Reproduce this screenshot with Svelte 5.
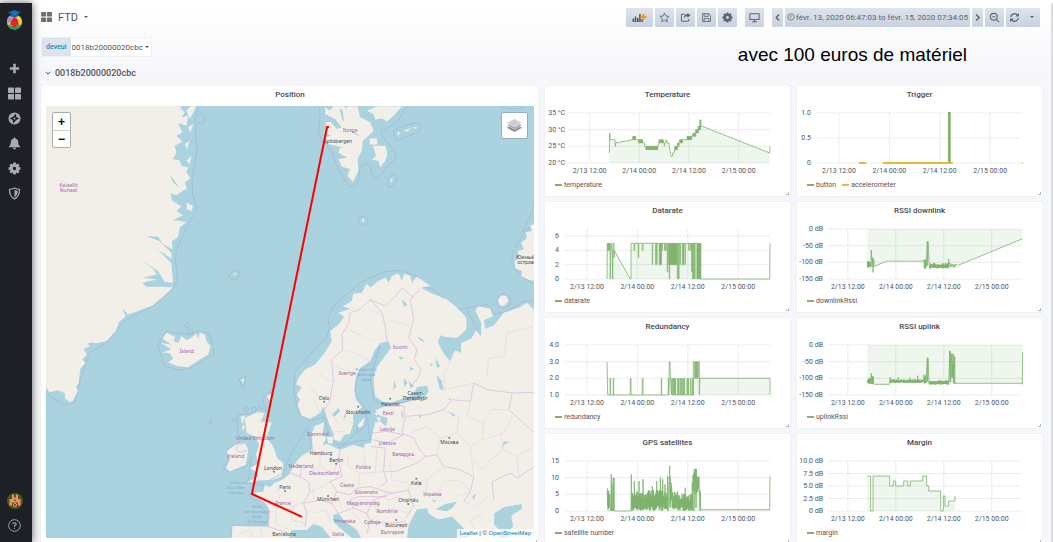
<script>
  let device = $state('0018b20000020cbc');

  const START = 6.78;
  const HOURS = 48.79;
  const RIGHT = 225;
  const TOP = 11;
  const BOTTOM = 61;
  const ticks = [
    [12, '2/13 12:00'],
    [24, '2/14 00:00'],
    [36, '2/14 12:00'],
    [48, '2/15 00:00']
  ];

  // Small seeded generator, so that the noisy series are the same on every load.
  let seed = 7;
  function rnd() {
    seed = (seed * 16807) % 2147483647;
    return seed / 2147483647;
  }
  function jitter(from, to, step, lo, hi) {
    const out = [];
    let up = false;
    for (let x = from; x <= to; x += step) {
      up = !up;
      const range = hi - lo;
      out.push([x, up ? hi - rnd() * range * 0.4 : lo + rnd() * range * 0.25]);
    }
    return out;
  }
  function square(from, to, step, lo, hi) {
    const out = [];
    for (let x = from; x <= to; x += step) out.push([x, hi], [x, lo], [x + step / 2, lo], [x + step / 2, hi]);
    return out;
  }
  // Short dips (or peaks) to a second value from a flat line.
  function spikes(base, list) {
    return list.flatMap(([x, v, w = 1]) => [[x, base], [x, v], [x + w, v], [x + w, base]]);
  }
  const ordered = (pts) => [...pts].sort((a, b) => a[0] - b[0]);

  const temperature = [
    [208, 23], [209, 29], [211, 27], [225, 27], [226, 25], [227, 26], [278, 27],
    ...square(279, 285, 2, 27, 28), [287, 27], ...square(296, 306, 2, 26, 27), [308, 26], [314, 26], [314, 25],
    ...square(318, 352, 2, 24, 25), [354, 25], [356, 26], ...square(358, 368, 2, 26, 27), [372, 26], [373, 25], [375, 26],
    [379, 27], [381, 26], [387, 26], [388, 25], [391, 23], [393, 22], [397, 22], [398, 23], [402, 23], [404, 24],
    ...square(405, 411, 2, 24, 25), [413, 26], ...square(414, 417, 2, 25, 26), ...square(420, 426, 2, 26, 27), [428, 27],
    [441, 27], ...square(442, 454, 2, 27, 28), [457, 28], ...square(460, 466, 2, 28, 29), ...square(468, 474, 2, 29, 30),
    ...square(475, 479, 2, 30, 31), [480, 33], [481, 30], [482, 33], [483, 31], [487, 31], [689, 23], [690, 25]
  ];
  const datarate = [
    [201, 0], [202, 5], ...square(203, 207, 2, 4, 5), [211, 5], [211, 0], [213, 5], [217, 4], [218, 0], [219, 5], [222, 5], [222, 3], [223, 4],
    [271, 0], [273, 0], [273, 5],
    ...spikes(5, [[282, 4, 2], [295, 3], [307, 4, 2], [337, 2, 1], [347, 2, 1], [350, 2], [358, 2], [361, 2, 1], [363, 2, 1], [366, 4],
      [374, 4], [377, 4], [382, 1], [386, 2], [388, 0, 1], [391, 2]]),
    ...square(393, 410, 2, 2, 5),
    ...spikes(5, [[412, 0, 1], [416, 0], [420, 2], [427, 2, 2], [430, 2, 1], [435, 2, 1], [446, 4], [452, 4], [455, 1], [458, 0], [461, 0], [464, 0]]),
    ...square(471, 481, 2, 0, 5), [482, 0], [689, 0], [690, 5]
  ];
  const redundancy = [
    [201, 3], [203, 1], ...spikes(1, [[210, 2, 2], [220, 2, 1], [271, 2, 2], [307, 2, 2], [364, 2, 1], [385, 2]]), [387, 2], [388, 3], [390, 3], [391, 2],
    ...spikes(1, [[395, 2, 2], [399, 2, 2], [403, 2, 1], [406, 2, 1], [413, 2], [416, 2, 1], [421, 2, 2], [425, 2, 1], [429, 2, 1], [433, 2, 1], [441, 2], [445, 2], [452, 2], [458, 2]]),
    [460, 1], [460, 3], ...square(464, 475, 3, 2, 3), [478, 3], [478, 1], [480, 2], [690, 2], [690, 1]
  ];
  const satellites = ordered([
    ...jitter(202, 210, 0.7, 0, 7), [212, 0], [214, 11], [215, 0], [216, 8], [217, 0], [220, 10], [221, 0], [222, 10], [223, 0], [273, 0], [274, 11], [275, 0],
    ...jitter(276, 382, 0.7, 0, 6.4), [283, 9], [297, 9], [309, 9.5], [337, 7.5], [350, 9],
    [361, 10], [368, 9.5], [375, 8], [383, 10.5], [384, 0], [389, 13.5], [390, 1],
    ...jitter(391, 395, 0.6, 1, 11), ...jitter(396, 415, 0.9, 0, 6), ...jitter(416, 456, 0.8, 0, 5.2),
    [436, 7], [457, 8.5], [458, 0], ...jitter(459, 478, 1, 5, 12.8), [462, 0], [468, 1], [480, 0], [481, 6], [482, 0.4], [689, 0.4], [690, 10.5]
  ]);
  const downlink = [
    ...jitter(217, 227, 0.9, -118, -92), [229, -63], [231, -115], [233, -85], [234, -130], [236, -90], [238, -112], [280, -95],
    ...jitter(281, 386, 2.2, -98, -95), ...jitter(387, 395, 0.9, -122, -90), [397, -37], [398, -110], [399, -38], [402, -90], [404, -120],
    ...jitter(405, 460, 0.9, -118, -102), [461, -90], [462, -105], ...jitter(463, 484, 2.4, -117, -101), [487, -110], [683, -29]
  ];
  const uplink = ordered([
    ...jitter(217, 228, 0.8, -118, -98), [229, -85], [230, -117], ...jitter(231, 236, 0.9, -118, -92), [237, -118], [284, -118], [285, -97],
    ...jitter(286, 386, 0.8, -114, -103), [310, -97], [345, -98], [368, -92],
    ...jitter(387, 394, 0.9, -118, -88), [397, -38], [398, -110], [399, -40], [402, -115],
    ...jitter(403, 462, 0.8, -119, -106), [464, -17], [465, -110], [466, -20], [467, -112], [468, -28], ...jitter(470, 475, 0.7, -115, -25),
    [476, -28], [477, -117], [479, -35], [480, -117], [481, -115], [681, -115], [682, -118], [683, -22]
  ]);
  const margin = [
    [217, 7], [227, 7], [227, 0], [234, 0], [234, 7], [284, 7], [284, 5], [295, 5], [295, 6], [302, 6], [302, 5], [326, 5], [326, 6],
    [338, 6], [338, 5], [346, 5], [346, 6], [383, 6], [383, 7], [395, 7], [395, 5], [401, 5], [401, 4], [437, 4], [437, 0],
    [445, 0], [445, 3], [450, 3], [450, 1], [461, 1], [461, 2], [480, 2], [480, 3]
  ];

  const GREEN = '#7eb26d';
  const ORANGE = '#eab839';
  const charts = [
    { title: 'Temperature', left: 23, shift: 5, gap: 3, lo: 20, hi: 35, y: [[35, '35 °C'], [30, '30 °C'], [25, '25 °C'], [20, '20 °C']], base: 20,
      series: [{ name: 'temperature', color: GREEN, lines: [temperature] }] },
    { title: 'Trigger', left: 20, shift: 2, gap: 6, lo: 0, hi: 1, y: [[1, '1.0'], [0.5, '0.5'], [0, '0']], base: 0,
      series: [
        { name: 'button', color: GREEN, width: 2, lines: [[[462, 0], [462, 1], [464, 1], [464, 0]]] },
        { name: 'accelerometer', color: ORANGE, width: 2, lines: [[[192, 0], [214, 0]], [[263, 0], [473, 0]], [[681, 0], [683, 0]]] }
      ] },
    { title: 'Datarate', left: 20, shift: 5, gap: 6, lo: 0, hi: 7, y: [[6, '6'], [4, '4'], [2, '2'], [0, '0']], base: 0,
      series: [{ name: 'datarate', color: GREEN, lines: [datarate] }] },
    { title: 'RSSI downlink', left: 30, shift: 2, gap: 4, lo: -150, hi: 0, y: [[0, '0 dB'], [-50, '-50 dB'], [-100, '-100 dB'], [-150, '-150 dB']], base: 0,
      series: [{ name: 'downlinkRssi', color: GREEN, lines: [downlink] }] },
    { title: 'Redundancy', left: 20, shift: 5, gap: 6, lo: 1, hi: 4, y: [[4, '4.0'], [3, '3.0'], [2, '2.0'], [1, '1.0']], base: 1,
      series: [{ name: 'redundancy', color: GREEN, lines: [redundancy] }] },
    { title: 'RSSI uplink', left: 30, shift: 2, gap: 4, lo: -150, hi: 0, y: [[0, '0 dB'], [-50, '-50 dB'], [-100, '-100 dB'], [-150, '-150 dB']], base: 0,
      series: [{ name: 'uplinkRssi', color: GREEN, lines: [uplink] }] },
    { title: 'GPS satellites', left: 20, shift: 5, gap: 6, lo: 0, hi: 15, y: [[15, '15'], [10, '10'], [5, '5'], [0, '0']], base: 0,
      series: [{ name: 'satellite number', color: GREEN, lines: [satellites] }] },
    { title: 'Margin', left: 30, shift: 2, gap: 4, lo: 0, hi: 10, y: [[10, '10.0 dB'], [7.5, '7.5 dB'], [5, '5.0 dB'], [2.5, '2.5 dB'], [0, '0 dB']], base: 0,
      series: [{ name: 'margin', color: GREEN, lines: [margin] }] }
  ];

  const yOf = (c, v) => BOTTOM - ((v - c.lo) / (c.hi - c.lo)) * (BOTTOM - TOP);
  const tickX = (c, t) => c.left + ((t - START) / HOURS) * (RIGHT - c.left);
  const line = (c, pts) => pts.map(([x, v]) => `${(x / 3 - c.shift).toFixed(1)},${yOf(c, v).toFixed(1)}`).join(' ');
  function area(c, pts) {
    const b = yOf(c, c.base);
    const first = pts[0][0] / 3 - c.shift;
    const last = pts[pts.length - 1][0] / 3 - c.shift;
    return `${first},${b} ${line(c, pts)} ${last},${b}`;
  }

  // Map labels: x, y, text, kind
  const places = [
    [69, 188, 'Kalaallit', 'country'], [69, 193, 'Nunaat', 'country'], [350, 133, 'Norge', 'country'], [338, 144, 'Spitsbergen', 'city'],
    [187, 353, 'Ísland', 'country'], [400, 349, 'Suomi', 'country'], [347, 375, 'Sverige', 'country'],
    [366, 371, 'Pohjanlahti', 'sea'], [366, 376, 'Bottniska', 'sea'], [366, 381, 'viken', 'sea'],
    [324, 400, 'Oslo', 'city'], [358, 414, 'Stockholm', 'city'], [390, 406, 'Helsinki', 'city'],
    [415, 395, 'Санкт-', 'city'], [415, 400, 'Петербург', 'city'], [388, 415, 'Eesti', 'country'], [387, 431, 'Latvija', 'country'],
    [387, 445, 'Lietuva', 'country'], [318, 436, 'Danmark', 'country'], [449, 444, 'Москва', 'city'],
    [403, 456, 'Беларусь', 'country'], [321, 455, 'Hamburg', 'city'], [336, 462, 'Berlin', 'city'],
    [301, 468, 'Nederland', 'country'], [363, 469, 'Polska', 'country'], [324, 475, 'Deutschland', 'country'],
    [273, 470, 'London', 'city'], [285, 489, 'Paris', 'city'], [347, 487, 'Česko', 'country'], [366, 494, 'Slovensko', 'country'],
    [416, 485, 'Київ', 'city'], [432, 496, 'Україна', 'country'], [328, 501, 'München', 'city'], [363, 505, 'Magyarország', 'country'],
    [408, 502, 'Chișinău', 'city'], [283, 505, 'France', 'country'], [387, 513, 'România', 'country'],
    [345, 523, 'Hrvatska', 'country'], [372, 524, 'Србија', 'country'], [396, 527, 'București', 'city'], [392, 534, 'България', 'country'],
    [338, 536, 'Italia', 'country'], [284, 536, 'Barcelona', 'city'], [236, 458, 'Ireland', 'country'], [255, 440, 'United Kingdom', 'country'],
    [236, 484, 'Celtic', 'sea'], [236, 489, 'Sea / Mer', 'sea'], [236, 494, 'Celtique', 'sea'],
    [257, 508, 'Golfe', 'sea'], [257, 513, 'de Gascogne', 'sea'], [257, 518, 'Golfo', 'sea'], [257, 523, 'de Vizcaya', 'sea'],
    [525, 260, 'Южный', 'city'], [525, 265, 'остров', 'city']
  ];
  const dots = [[324, 402], [358, 407], [390, 399], [336, 464], [285, 491], [274, 472], [416, 479], [328, 496], [408, 504], [396, 520], [449, 438]];

  const nav = ['Create', 'Dashboards', 'Explore', 'Alerting', 'Configuration', 'Server admin'];
</script>

{#snippet tiles()}
  <svg viewBox="0 0 13 12" aria-hidden="true"><path fill="currentColor" d="M1 0h4.300q.7 0 .7.700v4.100q0 .7-.7.700H.7q-.7 0-.7-.7V.7Q0 0 .7 0zM7.700 0h4.600q.7 0 .7.700v4.100q0 .7-.7.700H7.700q-.7 0-.7-.7V.7q0-.7.700-.7zM.7 6.500h4.600q.7 0 .7.700v4.100q0 .7-.7.700H.7q-.7 0-.7-.7V7.200q0-.7.700-.7zM7.700 6.500h4.600q.7 0 .7.700v4.100q0 .7-.7.700H7.700q-.7 0-.7-.7V7.200q0-.7.700-.7z" /></svg>
{/snippet}

{#snippet gear()}
  <svg viewBox="0 0 14 14" aria-hidden="true">
    <g fill="currentColor">
      {#each [0, 45, 90, 135] as a}
        <path d="M5.700 .6h2.600l.5 3h-3.600zM5.700 13.400h2.600l.5-3h-3.600z" transform="rotate({a} 7 7)" />
      {/each}
    </g>
    <circle cx="7" cy="7" r="3.200" fill="none" stroke="currentColor" stroke-width="2.800" />
  </svg>
{/snippet}

<div class="app">
  <nav class="side">
    <a class="logo" href="#home" aria-label="Home">
      <svg viewBox="0 0 18 22">
        <circle cx="9" cy="13" r="8" fill="#f4d03b" />
        <path d="M1 13.500A8 8 0 0 1 6.500 5.500Q7.500 9 4 14.500z" fill="#9b8fd0" />
        <path d="M6 5.500h6Q10.500 8.500 9 9T6 5.500z" fill="#2c6ec0" />
        <path d="M4.500 16Q5.500 9 9 8.500T13.500 16Q9 19 4.500 16z" fill="#e4202c" />
        <path d="M1.500 15.500Q5 17.500 9 17.300T16.600 15.500A8 8 0 0 1 1.500 15.500z" fill="#1aa24a" />
        <path d="M7 17.300L9 19l2-1.700z" fill="#e4202c" />
        <path d="M2 3L9 .5 16 3 9 5.500z" fill="#1770c2" />
        <path d="M4.500 4.500v2.300q4.500 2 9 0V4.500L9 6z" fill="#0d5aa7" />
      </svg>
    </a>
    <ul>
      {#each nav as name, i}
        <li>
          <a href="#{name.toLowerCase().replace(' ', '-')}" aria-label={name}>
            {#if i === 0}
              <svg viewBox="0 0 14 14"><path d="M7 2v10M2 7h10" stroke="currentColor" stroke-width="2.800" /></svg>
            {:else if i === 1}
              {@render tiles()}
            {:else if i === 2}
              <svg viewBox="0 0 14 14"><circle cx="7" cy="7" r="6.500" fill="currentColor" /><path d="M8.500 1.800L9 5.500 12.200 7 9 8.500 5.500 12.200 5 8.500 1.800 7 5 5.500z" fill="#1e2028" /><circle cx="7" cy="7" r="1.100" fill="currentColor" /></svg>
            {:else if i === 3}
              <svg viewBox="0 0 14 14"><path fill="currentColor" d="M7 .5q1 0 1 1.200Q11 2.600 11 6q0 3 2 4.200V11H1v-.8Q3 9 3 6q0-3.400 3-4.300Q6 .5 7 .5zM5.200 11.700h3.600Q8.500 13.500 7 13.500T5.200 11.700z" /></svg>
            {:else if i === 4}
              {@render gear()}
            {:else}
              <svg viewBox="0 0 14 14"><path d="M7 1Q10 2.500 12.400 2.500 12.600 10 7 13 1.400 10 1.600 2.500 4 2.500 7 1z" fill="none" stroke="currentColor" stroke-width="1.300" /><path d="M7 3q2 1 3.600 1.200Q10.300 9 7 11.200z" fill="currentColor" /></svg>
            {/if}
          </a>
        </li>
      {/each}
    </ul>
    <div class="foot">
      <a href="#profile" aria-label="Profile">
        <svg viewBox="0 0 16 16"><circle cx="8" cy="8" r="8" fill="#4b5a12" /><path d="M5 1.500h2v3h2v-3h2V6h2.500v6.500H11V9.500H5v3H2.500V6H5z" fill="#f08a72" /><circle cx="8" cy="12" r="1.600" fill="none" stroke="#f08a72" /><path d="M7.300 6.500h1.400V8H7.300z" fill="#4b5a12" /></svg>
      </a>
      <a href="#help" aria-label="Help">
        <svg viewBox="0 0 14 14"><circle cx="7" cy="7" r="6.300" fill="none" stroke="currentColor" /><path d="M5.200 5.600Q5.200 4 7 4t1.800 1.500Q8.800 6.500 7 7.300v1.100M7 9.300v1.300" fill="none" stroke="currentColor" stroke-width="1.200" /></svg>
      </a>
    </div>
  </nav>

  <main>
    <header>
      <button class="dash">{@render tiles()}<span>FTD</span><i class="caret"></i></button>
      <div class="tools">
        <div class="group">
          <button class="tool wide" aria-label="Add panel"><svg viewBox="0 0 17 12"><path d="M1.500 11V7M4 11V5M6.500 11V6.500M9 11V2M11.500 11V8" stroke="#4a505b" stroke-width="1.700" /><path d="M12.800 2v7M9.500 5.500h7" stroke="#f79520" stroke-width="2.200" /></svg></button>
          <button class="tool" aria-label="Star"><svg viewBox="0 0 12 12"><path d="M6 1.200l1.500 3.200 3.500.4-2.600 2.400.7 3.500L6 9l-3.100 1.700.7-3.500L1 4.800l3.500-.4z" fill="none" stroke="currentColor" stroke-width=".9" /></svg></button>
          <button class="tool" aria-label="Share"><svg viewBox="0 0 12 12"><path d="M5 2.500H2.500q-1 0-1 1V9q0 1 1 1h6q1 0 1-1V7.500" fill="none" stroke="currentColor" stroke-width="1.100" /><path d="M8 .8l3.500 2.700L8 6.200V4.600Q5 4.500 4.200 7.200 3.600 2.800 8 2.500z" fill="currentColor" /></svg></button>
          <button class="tool" aria-label="Save"><svg viewBox="0 0 12 12"><path d="M1.800 1.800h6.700l1.900 1.900v6.600H1.800zM3.500 1.800v3h4.300v-3M3.500 10.300V7h5v3.300" fill="none" stroke="currentColor" stroke-width=".9" /></svg></button>
          <button class="tool" aria-label="Settings">{@render gear()}</button>
        </div>
        <button class="tool" aria-label="Cycle view"><svg viewBox="0 0 12 12"><path d="M1 1.800h10v6.400H1zM6 8.500v2M3.500 10.700h5" fill="none" stroke="currentColor" stroke-width="1.100" /></svg></button>
        <div class="group">
          <button class="tool slim" aria-label="Earlier"><svg viewBox="0 0 8 12"><path d="M5.800 2.500L2.500 6l3.300 3.500" fill="none" stroke="currentColor" stroke-width="1.600" /></svg></button>
          <button class="tool range"><svg viewBox="0 0 12 12"><circle cx="6" cy="6" r="4.800" fill="none" stroke="currentColor" stroke-width="1.100" /><path d="M6 3v3.500H4" fill="none" stroke="currentColor" /></svg><span>févr. 13, 2020 06:47:03 to févr. 15, 2020 07:34:05</span></button>
          <button class="tool slim" aria-label="Later"><svg viewBox="0 0 8 12"><path d="M2.500 2.500L5.800 6 2.500 9.500" fill="none" stroke="currentColor" stroke-width="1.600" /></svg></button>
          <button class="tool" aria-label="Zoom out"><svg viewBox="0 0 12 12"><circle cx="5.200" cy="5.200" r="3.700" fill="none" stroke="currentColor" stroke-width="1.200" /><path d="M8 8l3 3M3.500 5.200h3.400" stroke="currentColor" stroke-width="1.200" /></svg></button>
          <div class="pair">
            <button class="tool" aria-label="Refresh"><svg viewBox="0 0 12 12"><path d="M2 5.500A4 4 0 0 1 9.300 3.600M10 6.500A4 4 0 0 1 2.700 8.400" fill="none" stroke="currentColor" stroke-width="1.400" /><path d="M10.800 1v4H6.900zM1.200 11V7h3.900z" fill="currentColor" /></svg></button>
            <button class="tool" aria-label="Refresh interval"><i class="caret"></i></button>
          </div>
        </div>
      </div>
    </header>

    <div class="submenu">
      <div class="variable">
        <label for="deveui">deveui</label>
        <div class="pick">
          <select id="deveui" bind:value={device}><option>0018b20000020cbc</option></select>
          <i class="caret"></i>
        </div>
      </div>
      <p class="note">avec 100 euros de matériel</p>
    </div>

    <h1><svg viewBox="0 0 6 6" aria-hidden="true"><path d="M.8 1.800L3 4l2.200-2.200" fill="none" stroke="currentColor" /></svg>{device}</h1>

    <div class="grid">
      <section class="panel position">
        <h2>Position</h2>
        <div class="map">
          <svg class="world" viewBox="46 107 488 431" preserveAspectRatio="xMidYMid slice" role="img" aria-label="Position">
            <rect x="46" y="107" width="488" height="431" fill="#aad3df" />
            <!-- Greenland, Iceland, the British Isles and smaller islands -->
            <g transform="translate(0 200) scale(.33333)">
              <g class="zone">
                <path d="M590-280Q595-262 589-250M589-225Q583-200 590-175L592-145 577-60 578-15 592 30 562 80 530 150 527 180 533 240 520 268 460 320 378 362 345 400 315 435 272 458 245 530 228 603Q210 622 185 610L138 583" />
                <circle cx="601" cy="-240" r="15" /><circle cx="562" cy="378" r="7" /><circle cx="571" cy="399" r="8" /><circle cx="632" cy="667" r="4" />
                <circle cx="739" cy="630" r="7" /><circle cx="761" cy="629" r="7" /><circle cx="704" cy="661" r="6" />
                <path d="M500 395L560 404 600 393 627 402 637 430 643 465 600 490 570 506 535 512 493 497 475 437zM688 232Q690 215 712 211 728 222 714 235 698 246 688 232zM717 538L737 530 735 550 728 565z" />
                <path d="M815 575Q790 585 790 605L800 635 775 620 765 640 715 645 712 700 725 720 680 750 684 785 670 800 680 815 700 812 740 800 755 770 745 845 725 850 790 855 795 875 745 885 790 925 806 960 795 975 700 975 690 990 700 1015" />
              </g>
              <path class="land" d="M540-282L548-270 536-278 555-260 545-245 565-250 560-220 535-228 548-200 530-190 548-172 525-160 530-140 520-120 540-116 545-100 565-95 560-80 572-62 555-50 562-30 545-26 510-75 520-50 550-25 530-12 512-18 518 5 545 22 530 35 550 48 520 62 560 68 540 85 535 112 517 125 518 150 490 135 462 92 476 112 440 110 478 125 515 160 515 178 440 128 475 152 515 192 520 250 495 248 475 215 420 180 460 208 472 225 430 235 472 240 428 250 440 262 490 262 520 264 490 292 460 317 405 338 385 345 367 325 378 350 358 368 348 395 320 425 285 432 303 402 290 428 262 432 272 440 252 448 262 465 248 480 258 490 242 508 238 550 230 560 235 575 220 603 212 608 198 598 195 580 175 572 150 578 138 560V-282zM575-282L590-278 570-240 560-265zM580-225L572-200 565-215zM570-175L562-150 555-165zM575-130L570-105 560-115zM560 10L580 20 575 35 562 30z" />
              <path class="land" d="M484 430L510 434 522 440 488 416 500 400 526 412 522 425 536 430 545 410 562 422 575 414 590 402 595 418 600 400 615 405 620 425 632 440 625 465 600 480 565 503 535 500 505 488 520 478 512 462 488 458 515 450z" />
              <path class="land" d="M735 655L770 638 795 640 782 665 815 668 800 715 820 740 832 775 850 790 845 830 820 840 775 842 740 848 775 830 768 815 750 805 775 790 768 765 778 735 765 710 740 700zM722 650L735 648 728 675zM725 680L735 675 730 695zM705 735L735 730 745 750 738 795 690 815 678 805 690 780 680 755zM800 590L812 583 812 605zM700 225L710 218 704 230zM723 540L733 535 730 552z" />
              <path class="border" d="M735 730L712 738 708 750 722 757 742 752M770 715L790 705" />
            </g>
            <!-- Continental Europe -->
            <g transform="translate(270 300) scale(.33333)">
              <path class="zone" d="M180 80L172 60 190 20 270-50 340-82 395-88 445-65 458-38 490-30 560 30 650 15 672 45 710 35 760 5 792 5M180 80L170 110 75 215 72 280 85 340 120 365 160 350 180 410 200 435 230 430 255 400 275 370 290 330 275 310 255 285 258 235 310 180 330 140 300 235 310 300 350 320 430 300M290 340L300 420 250 425 180 455 130 455 110 385 60 470 40 520 0 540M590 30L610 70 632 110M262 375L285 350 290 375 262 400zM315 345L345 350M60 690L140 660 200 714M792-285Q785-260 755-200L785-220M785-220Q715-160 725-105 745-70 792-45" />
              <path class="land" d="M792 34L770 10 745 25 700 40 682 62 670 78 645 88 640 62 668 50 660 28 622 20 615 35 632 68 632 110 618 92 602 118 572 130 572 160 555 152 545 168 540 185 522 165 502 128 512 105 465 80 520 112 560 115 588 90 588 55 560 25 530 0 480-20 452-35 480-40 440-68 425-50 420-70 402-78 395-55 385-78 365-70 355-50 345-66 320-52 300-35 290-48 275-20 250-18 245 5 218 20 240 28 205 40 222 52 205 75 180 95 185 125 160 165 135 195 105 210 85 235 78 255 95 262 80 285 90 300 82 315 95 347 120 357 150 340 160 320 168 345 178 375 190 400 192 420 210 425 222 405 240 402 250 370 248 345 260 338 275 322 258 300 252 270 258 230 270 205 300 185 315 150 330 130 355 125 362 145 340 175 318 205 310 240 315 290 335 305 360 310 400 296 430 285 440 262 470 258 475 275 462 295 430 302 392 312 350 318 315 332 328 348 352 355 348 380 330 365 315 368 308 395 303 430 285 432 280 445 250 435 210 450 170 432 158 438 168 415 158 400 162 368 135 378 125 400 128 450 95 468 75 490 60 520 35 540 12 550 0 562-15 555-20 575-50 578-12 612-2 630-5 680-112 678-115 720H810V34z" />
              <path class="land" d="M170 410L190 412 188 430 175 432zM262 375L285 350 278 378 265 385zM312 340L325 338 320 350zM318 355L332 352 328 368z" />
              <path class="lake" d="M55 718L65 690 110 690 130 672 155 680 185 718zM190 645L205 640 225 665 260 690 275 718H250L205 680 188 662zM410 720L415 675 440 628 470 625 475 640 505 658 545 650 585 690 605 720zM495 628L525 612 560 605 545 625 528 635zM680 720L690 695 670 672 672 640 700 622 752 612 755 625 722 648 728 680 710 695 715 720z" />
              <path class="land" d="M475 640L500 630 532 634 540 648 520 655 495 655z" />
              <path class="lake" d="M205 325L210 335 195 350 185 345zM225 340L228 350 220 358zM385 170L402 175 390 180zM418 200L432 210 420 212zM372 240L378 262 368 270zM400 235L412 250 402 262zM415 245L432 260 420 265zM440 110L455 118 465 130 450 122zM495 175L510 200 500 205zM498 225L515 245 520 272 508 268zM535 335L555 345 548 352zM392 330L400 345 396 358zM445 348L455 345 450 355zM535 295L543 297 537 302zM690 450L700 425 718 425 700 435zM485 600L500 602 490 608zM605 590L618 580 610 600zM478 190L488 195 482 200zM395 0L412 15 400 22z" />
              <path class="border" d="M452-35L420 0 430 60 415 115 440 150 432 180 452 210 440 240 420 262M430-5L395-35 375-10 345 20 300 0 270 30 240 40 235 75 215 105 218 150 185 180 190 240 180 300 165 330M300 0L335 40 345 80 350 125M345 320L400 318 405 350 395 400 430 415 445 445 465 470 440 490 375 515 345 515M305 400L350 395 400 405M308 420L350 430 400 405M303 440L345 445 340 515 350 545 330 560M210 450L205 480 215 530 180 545 200 575 240 585 260 565 300 560 345 575 365 580M130 450L140 462M75 490L95 500 90 530 115 545 120 575 100 610 110 640 105 680M35 540L60 520 90 530M100 610L150 600 185 610 200 575M185 610L205 640 250 625 290 640 310 600 365 580 415 570 430 620 405 655M250 625L240 600 265 590 350 590M290 640L300 665 360 670 405 665M300 665L290 700M465 470L500 465 520 500 570 510 610 530 600 575 580 605M405 350L470 345 520 330 545 300 600 305 610 250 650 270 725 280 792 278M725 280L715 330 792 400M670 600L665 545 720 520 740 535 792 500M0 630L-5 680 55 700" />
              <path class="region" d="M150 220L175 245 200 240M120 260L150 300M195 200L245 220M218 150L265 165 300 185M235 90L310 125M600 305L590 350 640 370 635 420 700 400 725 350M640 370L660 330 715 330M635 420L600 440 560 400 510 415 470 380 420 400M600 440L610 530M560 400L565 350 520 330M510 415L500 465M660 480L700 450 740 470 792 440M660 480L635 510 610 480M700 450L690 400M740 470L745 535M380 460L430 480M360 490L365 540 420 550 470 540 520 500M470 540L465 590M420 550L415 570M520 545L570 540 600 575M520 545L500 590M230 460L235 500 270 520 345 515M270 520L265 560M280 450L285 500M320 450L315 520M150 460L150 500 190 520M150 500L110 520M190 520L205 480M120 575L160 560 180 545M130 600L130 560M20 560L30 600 70 620 105 605M-20 600L20 620 30 600M20 620L15 670 60 690M70 620L65 660 105 670M130 640L170 630 180 665M310 600L320 640 370 625 415 640M340 575L350 600 390 590M210 600L215 630M260 600L290 610M270 660L250 640M580 605L620 620 650 590M640 640L600 660 620 700M520 230L555 150M520 215L525 270 610 250M650 230L655 175 700 170 710 100 792 80M560 590L600 575M335 45L300 30M350 60L420 80M170 330L215 380M150 340L130 300M215 360L250 370M180 395L225 395M-90 700L-60 690M-60 690L-50 715M-30 680L-20 715" />
            </g>
            <!-- Svalbard and Novaya Zemlya -->
            <g transform="translate(270 80) scale(.33333)">
              <g class="zone">
                <path d="M147 81L150 110 145 160 155 185 185 215 200 260 235 320Q255 332 266 300L270 262Q290 250 300 262L308 295Q325 305 345 270L375 240Q385 220 350 190L330 160 380 130 410 82M690 82Q730 98 765 82" />
                <path d="M370 155Q380 145 440 130 460 140 445 160 420 165 385 185 370 180 370 155zM350 310Q355 285 375 286 388 300 365 322 350 328 350 310z" />
                <circle cx="279" cy="425" r="14" /><path d="M680 660Q690 635 710 645 730 660 715 680 695 690 680 675z" />
              </g>
              <path class="land" d="M165 85L180 95 190 82 222 82 228 90 232 82 262 82 270 115 300 130 310 155 295 170 278 185 275 215 262 240 265 275 248 308 232 290 240 270 215 262 205 240 232 235 205 222 210 205 232 208 175 195 162 175 182 170 160 160 175 150 165 130 182 128 200 150 215 145 195 120 165 105zM290 95L320 82 395 82 375 105 350 128 335 118 315 122 310 105zM297 178L320 178 322 196 300 196zM308 200L345 200 352 225 345 245 330 265 325 245 305 242 318 230zM380 160L390 158 385 170zM400 155L425 145 410 158zM428 145L440 142 435 150zM276 420h6v9h-6zM360 302L368 296 364 312z" />
              <path class="land" d="M800 430L778 440 785 455 765 458 770 475 752 490 760 510 742 515 745 535 732 545 735 568 755 575 752 590 775 602 800 605zM682 662L692 648 708 650 714 665 700 680 688 678z" />
              <path class="lake" d="M208 88L216 120 222 130 218 95zM240 150L275 175 245 160z" />
            </g>
            {#each places as [x, y, text, kind]}
              <text class={kind} {x} {y}>{text}</text>
            {/each}
            {#each dots as [cx, cy]}
              <circle class="dot" {cx} {cy} r="1" />
            {/each}
            <path class="track" d="M329 128h-2L252 494l50 23" />
          </svg>
          <div class="zoom"><button aria-label="Zoom in">+</button><button aria-label="Zoom out">−</button></div>
          <button class="layers" aria-label="Layers">
            <svg viewBox="0 0 18 16"><path d="M1 10.500L9 15l8-4.500-3-1.600L9 11.500 4 8.900z" fill="#8d8d8d" /><path d="M1 7.800l8 4.400 8-4.400-3-1.600-5 2.700-5-2.700z" fill="#a9a9a9" stroke="#fff" stroke-width=".4" /><path d="M1 5.200L9 .8l8 4.400-8 4.400z" fill="#cfcfcf" stroke="#fff" stroke-width=".4" /></svg>
          </button>
          <div class="credit"><a href="#leaflet">Leaflet</a> | © <a href="#osm">OpenStreetMap</a></div>
        </div>
      </section>

      {#each charts as c}
        <section class="panel">
          <h2>{c.title}</h2>
          <svg class="chart" viewBox="0 0 245 76" role="img" aria-label={c.title}>
            {#each c.y as [v, text]}
              <line class="rule" x1={c.left} x2={RIGHT} y1={yOf(c, v)} y2={yOf(c, v)} />
              <text text-anchor="end" x={c.left - c.gap} y={yOf(c, v) + 2}>{text}</text>
            {/each}
            {#each ticks as [t, text]}
              <line class="rule" x1={tickX(c, t)} x2={tickX(c, t)} y1={TOP} y2={BOTTOM} />
              <text text-anchor="middle" x={tickX(c, t)} y="71">{text}</text>
            {/each}
            {#each c.series as s}
              {#each s.lines as pts}
                <polygon points={area(c, pts)} fill={s.color} opacity=".12" />
                <polyline points={line(c, pts)} fill="none" stroke={s.color} stroke-width={s.width ?? 0.8} />
              {/each}
            {/each}
          </svg>
          <ul class="legend">
            {#each c.series as s}
              <li><i style="background: {s.color}"></i>{s.name}</li>
            {/each}
          </ul>
        </section>
      {/each}
    </div>
  </main>
</div>

<style>
  :global(body) { margin: 0; background: #fff; }
  .app {
    display: flex;
    box-sizing: border-box;
    height: 100vh;
    padding-top: 3px;
    font-family: Roboto, 'Liberation Sans', sans-serif;
    font-size: 7px;
    color: #52545c;
  }
  svg { display: block; }
  button, select { font: inherit; color: inherit; border: 0; padding: 0; background: none; }
  ul { list-style: none; margin: 0; padding: 0; }
  a { text-decoration: none; }

  .side {
    z-index: 1;
    flex: none;
    display: flex;
    flex-direction: column;
    width: 32px;
    background: #1e2028;
    box-shadow: 0 0 8px rgba(30, 32, 40, .7);
  }
  .side a { display: flex; align-items: center; justify-content: center; height: 25px; width: 29px; color: #a9abb1; }
  .side a svg { width: 13px; height: 13px; }
  .side .logo { height: 34px; margin-bottom: 19px; }
  .side .logo svg { width: 17px; height: 22px; }
  .foot { margin-top: auto; padding-bottom: 4px; }
  .foot a:first-child svg { width: 16px; height: 16px; }

  main {
    flex: 1;
    min-width: 0;
    overflow-y: auto;
    scrollbar-width: none;
    padding: 0 9px 0 9px;
    border-right: 2px solid #dcdde0;
    background: linear-gradient(#fff, #f6f7fa 70px);
  }
  header { display: flex; align-items: center; justify-content: space-between; height: 28px; }
  .dash { display: flex; align-items: center; gap: 6px; font-size: 11px; }
  .dash svg { width: 11px; height: 10px; color: #6b6d74; }
  .caret { border: 2px solid transparent; border-top-color: currentColor; border-bottom: 0; }
  .tools { display: flex; gap: 8px; padding-right: 2px; }
  .group { display: flex; gap: 2px; }
  .tool {
    display: flex;
    align-items: center;
    justify-content: center;
    width: 19px;
    height: 19px;
    border-radius: 1px;
    background: linear-gradient(#dde4ed, #c8d1dd);
    color: #60646e;
  }
  .tool svg { width: 11px; height: 11px; }
  .wide { width: 27px; }
  .wide svg { width: 15px; }
  .slim { width: 11px; }
  .slim svg { width: 7px; }
  .range { width: auto; padding: 0 2px; gap: 1px; font-size: 8px; white-space: nowrap; }
  .range svg { width: 8px; height: 8px; }
  .pair { display: flex; }
  .pair .tool { width: 17px; }

  .submenu { display: flex; justify-content: space-between; align-items: flex-start; padding-top: 6px; }
  .variable { display: flex; height: 20px; border: 1px solid #edf0f4; box-sizing: border-box; background: #fff; }
  .variable label { padding: 0 4px; line-height: 18px; background: #dde4ed; color: #1c86b4; font-weight: 500; }
  .pick { display: flex; align-items: center; padding: 0 2px 0 1px; gap: 1px; }
  .pick select { appearance: none; font-size: 8px; }
  .note {
    margin: 7px 75px 0 0;
    font-family: 'Liberation Sans', Arial, sans-serif;
    font-size: 19px;
    line-height: 22px;
    color: #000;
  }
  h1 { display: flex; align-items: center; gap: 4px; margin: 0; padding: 0 0 7px 4px; height: 13px; font-size: 9px; font-weight: 500; }
  h1 svg { width: 6px; height: 6px; }

  .grid { display: grid; grid-template-columns: repeat(4, minmax(0, 1fr)); gap: 6px 7px; }
  .panel { position: relative; background: #fff; box-shadow: 0 0 0 1px #f0f2f5; padding-bottom: 4px; }
  .panel::after {
    content: '';
    position: absolute;
    right: 1px;
    bottom: 1px;
    width: 2px;
    height: 2px;
    border: solid #b0b4bb;
    border-width: 0 1px 1px 0;
  }
  .position { grid-column: span 2; grid-row: span 4; display: flex; flex-direction: column; padding: 0 4px 6px 5px; }
  h2 { margin: 0; height: 16px; line-height: 18px; text-align: center; font-size: 8px; font-weight: 500; color: #464851; }
  .chart { width: 100%; }
  .chart text { font-size: 7px; fill: #52545c; }
  .rule { stroke: #ecedef; stroke-width: 1; }
  .legend { display: flex; gap: 6px; padding-left: 10px; line-height: 14px; }
  .legend li { display: flex; align-items: center; gap: 2px; }
  .legend i { width: 7px; height: 2px; }

  .map { position: relative; flex: 1; min-height: 0; margin-top: 4px; }
  .world { position: absolute; width: 100%; height: 100%; }
  .land { fill: #f2efe9; }
  .lake { fill: #aad3df; }
  .zone { fill: none; stroke: #9fb4d8; stroke-width: 2; }
  .border { fill: none; stroke: #d9b3da; stroke-width: 2; }
  .region { fill: none; stroke: #e6d5e3; stroke-width: 2; }
  .world text { font-family: 'Noto Sans', sans-serif; font-size: 5px; text-anchor: middle; }
  .country { fill: #9c63a4; }
  .city { fill: #444; }
  .world .sea { fill: #7fa3cf; font-size: 4px; }
  .dot { fill: #777; }
  .track { fill: none; stroke: #f00; stroke-width: 2; }
  .zoom, .layers { position: absolute; top: 6px; border: 1px solid #a9adb0; border-radius: 2px; background: #fff; }
  .zoom { left: 6px; display: grid; }
  .zoom button { width: 17px; height: 17px; font: bold 12px/16px 'Liberation Sans', sans-serif; color: #000; }
  .zoom button + button { border-top: 1px solid #ccc; }
  .layers { right: 6px; width: 27px; height: 27px; display: flex; align-items: center; justify-content: center; border-color: #8fb0bb; }
  .layers svg { width: 17px; height: 15px; }
  .credit {
    position: absolute;
    right: 0;
    bottom: 0;
    padding: 0 3px;
    background: rgba(255, 255, 255, .75);
    font-family: 'Liberation Sans', sans-serif;
    font-size: 6px;
    line-height: 9px;
    color: #333;
  }
  .credit a { color: #0078a8; }
</style>
